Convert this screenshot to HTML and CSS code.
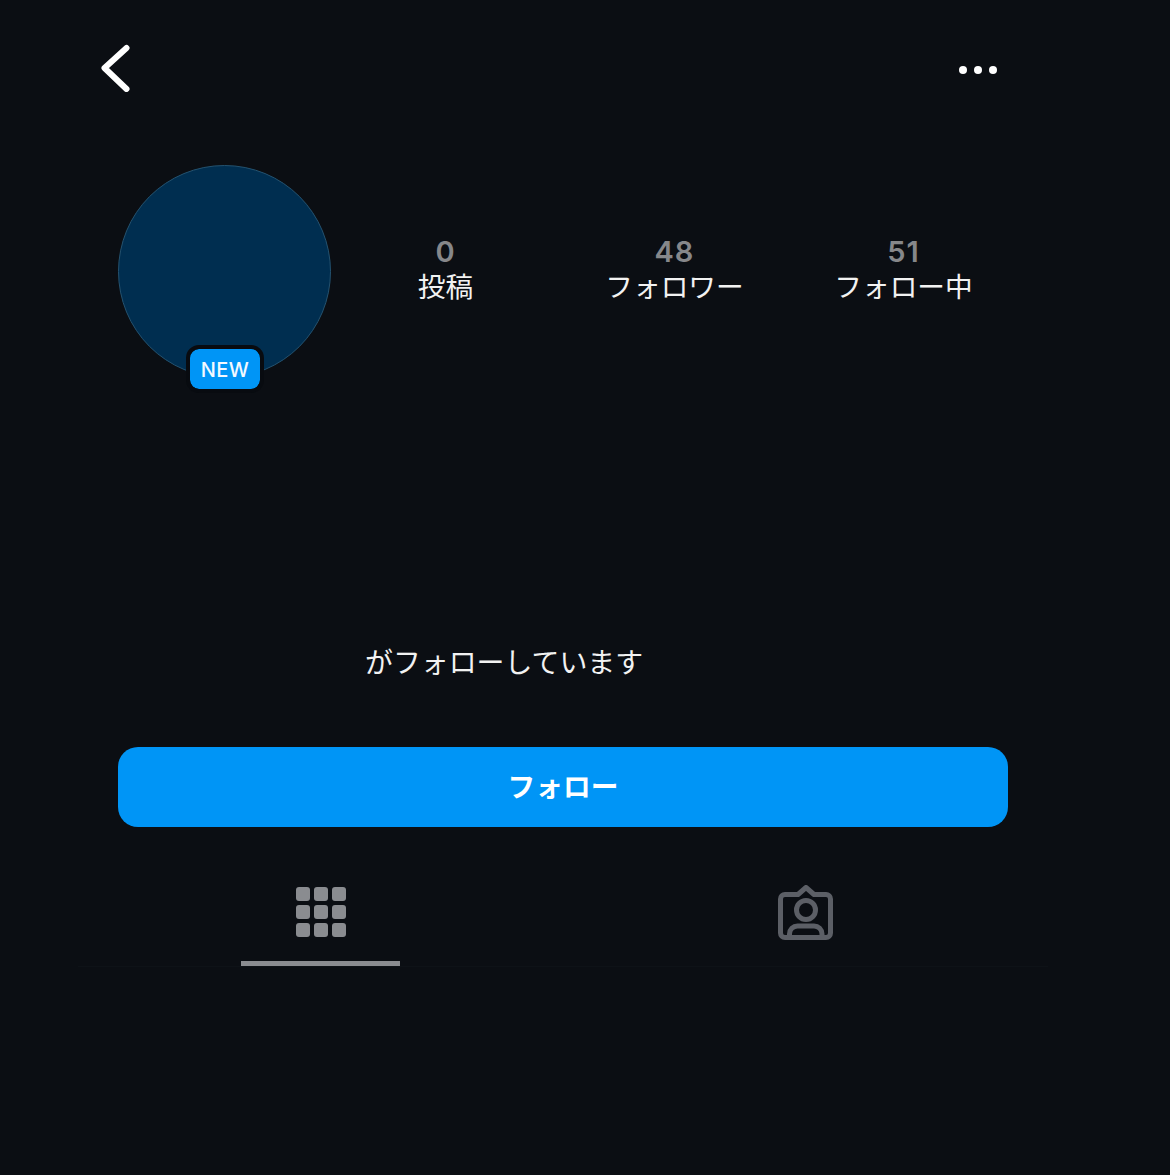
FILE: index.html
```html
<!DOCTYPE html>
<html lang="ja">
<head>
    <meta charset="UTF-8">
    <meta name="viewport" content="width=device-width, initial-scale=1.0">
    <title>Profile</title>
    <link rel="stylesheet" href="styles.css">
</head>
<body>
    <div class="page">
        <header class="topbar">
            <svg class="back" width="30" height="48" viewBox="0 0 30 48">
                <path d="M26.500 4 L4.500 24 L26.500 45" fill="none" stroke="#fff" stroke-width="6" stroke-linecap="round" stroke-linejoin="round"/>
            </svg>
            <div class="dots"><span></span><span></span><span></span></div>
        </header>

        <section class="profile">
            <div class="avatar">
                <div class="badge">NEW</div>
            </div>
            <div class="stats">
                <div class="stat"><div class="num">0</div><div class="label">投稿</div></div>
                <div class="stat"><div class="num">48</div><div class="label">フォロワー</div></div>
                <div class="stat"><div class="num">51</div><div class="label">フォロー中</div></div>
            </div>
        </section>

        <p class="followed">がフォローしています</p>

        <button class="follow">フォロー</button>

        <nav class="tabs">
            <div class="tab active">
                <svg width="50" height="56" viewBox="0 0 50 56" fill="#8a8c90">
                    <rect x="0" y="2" width="14" height="14" rx="3"/>
                    <rect x="18" y="2" width="14" height="14" rx="3"/>
                    <rect x="36" y="2" width="14" height="14" rx="3"/>
                    <rect x="0" y="20" width="14" height="14" rx="3"/>
                    <rect x="18" y="20" width="14" height="14" rx="3"/>
                    <rect x="36" y="20" width="14" height="14" rx="3"/>
                    <rect x="0" y="38" width="14" height="14" rx="3"/>
                    <rect x="18" y="38" width="14" height="14" rx="3"/>
                    <rect x="36" y="38" width="14" height="14" rx="3"/>
                </svg>
            </div>
            <div class="tab">
                <svg width="56" height="56" viewBox="0 0 56 56" fill="none" stroke="#5c5f66" stroke-width="5">
                    <path d="M7 9.500 H20 L28 2.500 L36 9.500 H48 a4.500 4.500 0 0 1 4.500 4.500 V48 a4.500 4.500 0 0 1 -4.500 4.500 H7 a4.500 4.500 0 0 1 -4.500 -4.500 V14 a4.500 4.500 0 0 1 4.500 -4.500 Z" stroke-linejoin="round"/>
                    <circle cx="28" cy="25" r="9.500"/>
                    <path d="M11.500 52 V49 a8 8 0 0 1 8 -8 H36 a8 8 0 0 1 8 8 V52"/>
                </svg>
            </div>
        </nav>
    </div>
</body>
</html>
```

FILE: styles.css
```css
*{
    box-sizing: border-box;
}
body{
    margin: 0;
    background-color: #0b0e13;
    color: #f2f2f2;
    font-family: "Noto Sans CJK JP", "Noto Sans", sans-serif;
}
.page{
    width: 1170px;
    height: 1175px;
    padding: 44px 162px 0 118px;
    overflow: hidden;
}
.topbar{
    display: flex;
    justify-content: space-between;
    align-items: center;
    height: 48px;
    margin: 0 11px 73px -18px;
}
.back{
    display: block;
}
.dots{
    display: flex;
    gap: 7px;
    margin-top: 4px;
}
.dots span{
    width: 8px;
    height: 8px;
    border-radius: 50%;
    background-color: #fff;
}
.profile{
    display: flex;
}
.avatar{
    position: relative;
    flex: none;
    width: 213px;
    height: 213px;
    border-radius: 50%;
    background-color: #002e50;
    border: 1px solid #24526f;
}
.badge{
    position: absolute;
    left: 67px;
    top: 179px;
    width: 78px;
    height: 48px;
    border: 4px solid #080b10;
    border-radius: 13px;
    background-color: #0095f6;
    background-clip: padding-box;
    color: #f2f9ff;
    font-family: Inter, sans-serif;
    font-weight: 500;
    font-size: 20px;
    letter-spacing: 0.5px;
    line-height: 42px;
    text-align: center;
}
.stats{
    display: grid;
    grid-template-columns: repeat(3, 229px);
    margin-right: -10px;
    padding-top: 70px;
}
.stat{
    text-align: center;
}
.num{
    color: #86878a;
    font-family: Inter, sans-serif;
    font-weight: 600;
    font-size: 29px;
    letter-spacing: 1px;
    line-height: 34px;
}
.label{
    font-size: 27.700px;
    line-height: 33px;
}
.followed{
    margin: 263px 0 66px;
    padding-left: 247px;
    font-size: 27.900px;
    line-height: 40px;
}
.follow{
    display: block;
    width: 100%;
    height: 80px;
    padding-bottom: 6px;
    border: none;
    border-radius: 20px;
    background-color: #0095f6;
    color: #fff;
    font-family: "Noto Sans CJK JP", sans-serif;
    font-weight: 700;
    font-size: 27.700px;
    cursor: pointer;
}
.tabs{
    display: grid;
    grid-template-columns: 1fr 1fr;
    margin: 58px -40px 0;
    border-bottom: 1px solid #0e1217;
}
.tab{
    display: flex;
    flex-direction: column;
    align-items: center;
    height: 81px;
}
.tab svg{
    display: block;
}
.tab.active::after{
    content: "";
    width: 159px;
    height: 5px;
    margin-top: 20px;
    background-color: #8a8c90;
}
```
